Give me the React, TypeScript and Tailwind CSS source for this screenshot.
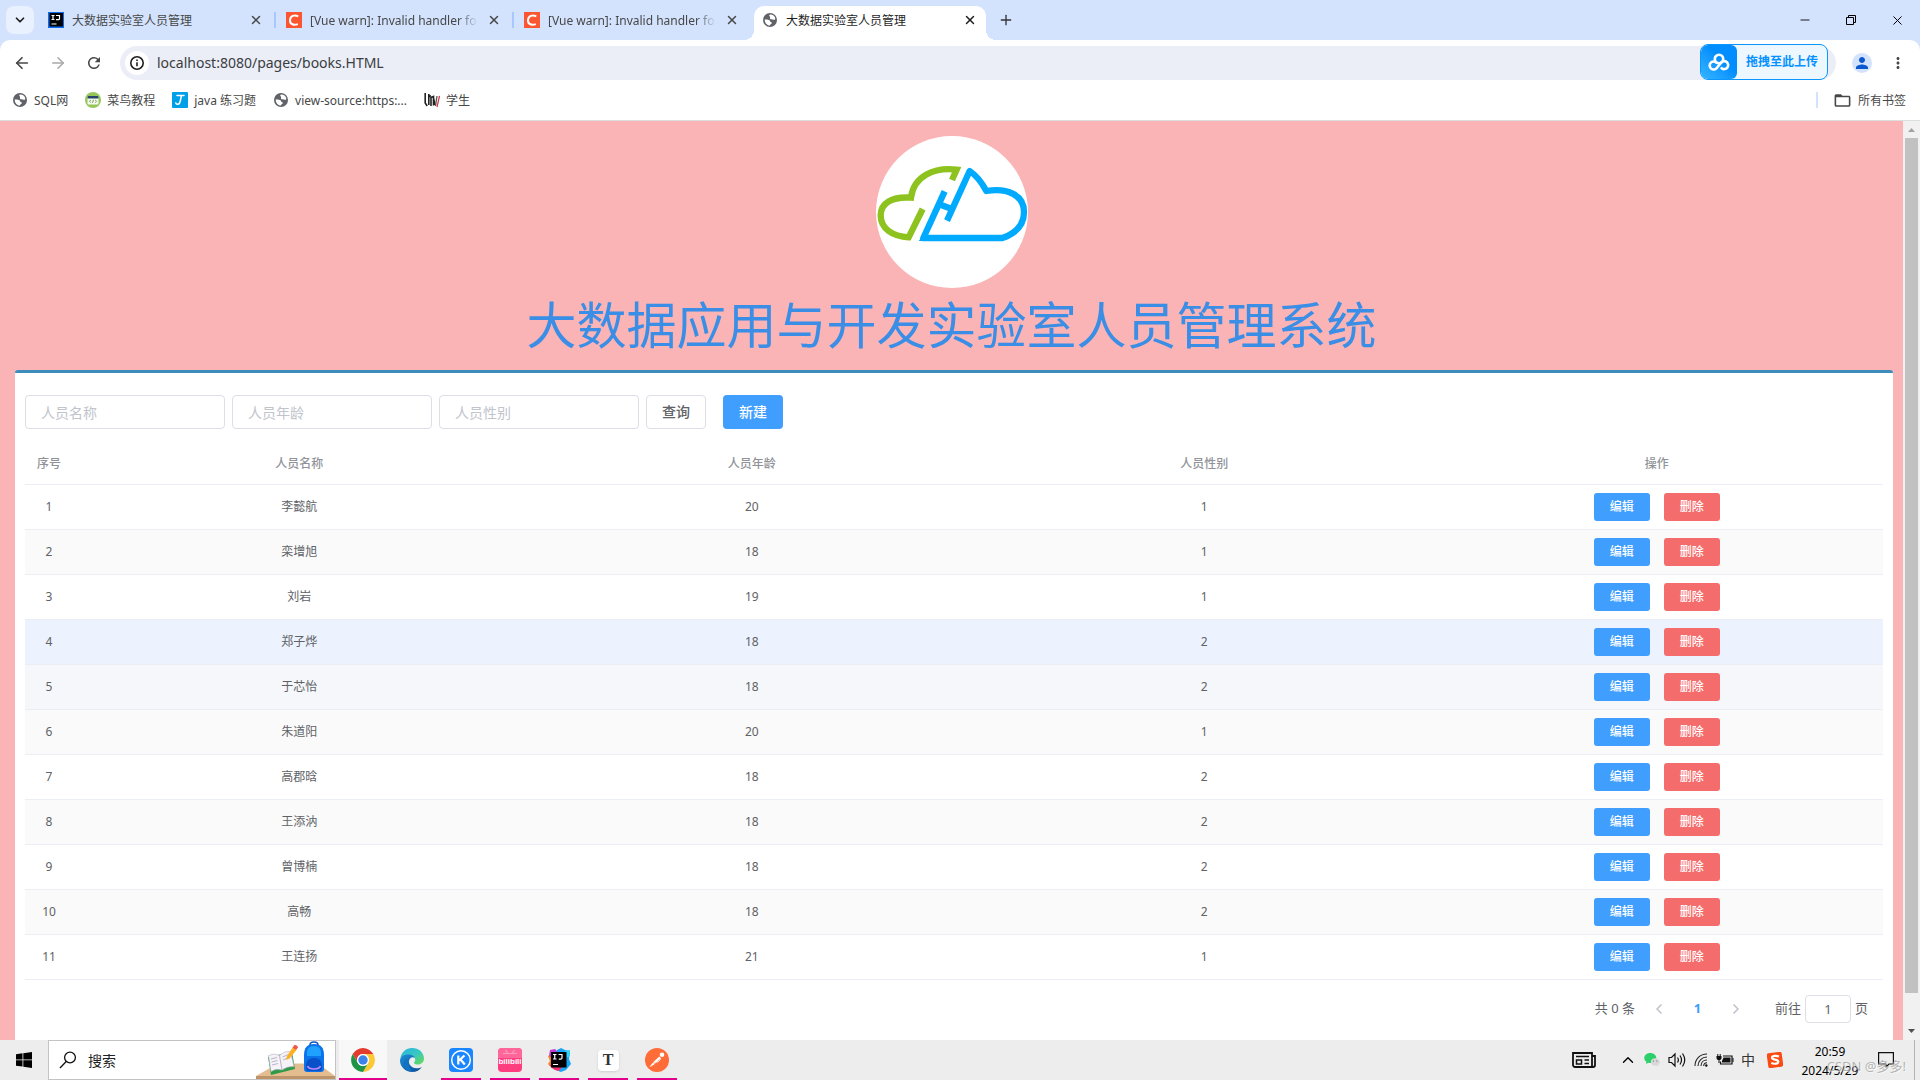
import React, { useState } from 'react';
import { ArrowLeft, ArrowRight, ChevronDown, ChevronLeft, ChevronRight, ChevronUp, Minus, Plus, X } from 'lucide-react';
import { MdFolderOpen, MdMoreVert, MdPerson, MdRefresh } from 'react-icons/md';

interface Person {
  id: number;
  name: string;
  age: number;
  gender: number;
}

interface BrowserTab {
  title: string;
  icon: React.ReactNode;
  active?: boolean;
}

const people: Person[] = [
  { id: 1, name: '李懿航', age: 20, gender: 1 },
  { id: 2, name: '栾增旭', age: 18, gender: 1 },
  { id: 3, name: '刘岩', age: 19, gender: 1 },
  { id: 4, name: '郑子烨', age: 18, gender: 2 },
  { id: 5, name: '于芯怡', age: 18, gender: 2 },
  { id: 6, name: '朱道阳', age: 20, gender: 1 },
  { id: 7, name: '高郡晗', age: 18, gender: 2 },
  { id: 8, name: '王添汭', age: 18, gender: 2 },
  { id: 9, name: '曾博楠', age: 18, gender: 2 },
  { id: 10, name: '高畅', age: 18, gender: 2 },
  { id: 11, name: '王连扬', age: 21, gender: 1 },
];

/* ---------- icons ---------- */

const GlobeIcon = () => (
  <svg viewBox="0 0 16 16" className="size-4 shrink-0">
    <circle cx="8" cy="8" r="7" fill="#5f6368" />
    <path d="M8.2 2.6c1.8-.3 3.7.8 4.6 2.5.6 1.2.5 2.3.2 2.6-.5.4-1.3 0-2-.2-1-.3-2.3 0-2.9-.8-.5-.7.3-1.4-.1-2-.3-.5-.9-.3-.8-1.1.1-.6.5-.9 1-1z" fill="#fff" />
    <path d="M2.7 7.5c1.6-.2 3.7-.1 4.8.7.9.7.3 1.5 1.3 1.7.9.2 1.2.6.9 1.4-.4 1-1.6 1.200-1.800 2.200-2.600.1-5.200-2.200-5.200-6z" fill="#fff" />
  </svg>
);

const IdeaIcon = () => (
  <svg viewBox="0 0 16 16" className="size-4 shrink-0">
    <rect width="16" height="16" fill="#0b6cf0" />
    <rect x="1.5" y="1" width="13.5" height="13.5" fill="#000" />
    <path d="M3.5 3.500h3M5 3.500v4M3.500 7.500h3M8 3.500h3.500v3.200q0 .9-1.200.9H8M3.500 12h5" stroke="#fff" strokeWidth="1.2" fill="none" />
  </svg>
);

const CsdnIcon = () => (
  <svg viewBox="0 0 16 16" className="size-4 shrink-0">
    <rect width="16" height="16" fill="#fc5531" />
    <path d="M12.300 4.300C8.500 2.600 4.200 3.600 4 8.200c-.2 4.300 4 5.300 7.800 3.900" stroke="#fff" strokeWidth="2" fill="none" />
  </svg>
);

const RunoobIcon = () => (
  <svg viewBox="0 0 16 16" className="size-4 shrink-0">
    <circle cx="8" cy="8" r="8" fill="#96c65a" />
    <rect x="2.5" y="4" width="11" height="8.5" rx="1" fill="#f2f8ea" />
    <path d="M2.500 6.500V5a1 1 0 0 1 1-1h9a1 1 0 0 1 1 1v1.500z" fill="#27456b" />
    <path d="M5.800 8l-1.300 1.300 1.300 1.300M10.200 8l1.300 1.300-1.300 1.300M8.500 7.800l-1 3" stroke="#5b7f3a" strokeWidth=".8" fill="none" />
  </svg>
);

const JavaIcon = () => (
  <svg viewBox="0 0 16 16" className="size-4 shrink-0">
    <rect width="16" height="16" rx="1" fill="#00a0e9" />
    <path d="M5 3.500h7M9.500 3.500L8 10c-.6 2.600-3.600 3-4.200 1" stroke="#fff" strokeWidth="1.5" fill="none" strokeLinecap="round" />
  </svg>
);

const StudentIcon = () => (
  <svg viewBox="0 0 16 16" className="size-4 shrink-0" fill="none">
    <path d="M1.200 1v10l2 3M4.800 2v11M4.800 5l2-1.500M7 5v9M7 5.500l2.500-1v9M9.500 6L11 13" stroke="#222" strokeWidth="1.6" />
    <path d="M13 4l-1.500 10" stroke="#555" strokeWidth="1.3" />
    <path d="M15.500 4l-2.500 11" stroke="#d0343c" strokeWidth="1.2" />
  </svg>
);

const InfoIcon = () => (
  <svg viewBox="0 0 16 16" className="size-4" fill="none" stroke="#1f1f1f">
    <circle cx="8" cy="8" r="6.2" strokeWidth="1.6" />
    <path d="M8 7.200v4M8 4.500v1.600" strokeWidth="1.6" />
  </svg>
);

const NetdiskIcon = () => (
  <svg viewBox="0 0 22 18" className="h-[18px] w-[22px]" fill="none" stroke="#fff" strokeWidth="2.6">
    <circle cx="11" cy="6" r="4.2" />
    <path d="M8.300 9.500a4 4 0 1 0 .7 5.300l3.600-4.600a4 4 0 1 1 1 5" strokeLinecap="round" />
  </svg>
);

const CloudLogo = () => (
  <svg viewBox="105 48 456 456" className="size-[152px] rounded-full bg-white" fill="none" strokeWidth="19">
    <path d="M333 180L347 149C280 141 218 168 210 233C152 229 119 250 119 286C119 326 155 350 203 352L245 267" stroke="#8dc21f" />
    <path d="M311 214L247 354H484C524 340 549 315 549 276C549 226 500 202 436 213C424 190 405 166 386 153L318 302" stroke="#00aaff" strokeLinejoin="round" />
    <path d="M233 363L252 338L260 363Z" fill="#00aaff" />
    <path d="M300 255L333 267" stroke="#00aaff" />
  </svg>
);

const WindowsIcon = () => (
  <svg viewBox="0 0 16 16" className="size-4" fill="#000">
    <path d="M0 2.200L6.500 1.300V7.500H0zM7.300 1.200L16 0v7.500H7.300zM0 8.300h6.500v6.300L0 13.700zM7.300 8.300H16V16l-8.700-1.200z" />
  </svg>
);

const SearchIcon = () => (
  <svg viewBox="0 0 18 18" className="size-[18px] shrink-0" fill="none" stroke="#111" strokeWidth="1.3">
    <circle cx="11" cy="6.5" r="5.4" />
    <path d="M7.200 10.500L1 17" />
  </svg>
);

const DeskPicture = () => (
  <svg viewBox="0 0 79 38" className="h-[38px] w-[79px] self-end">
    <path d="M0 35L22 22.500H62L79 35z" fill="#e3bd8f" />
    <path d="M0 35h79v3H0z" fill="#bd9469" />
    <path d="M12 16l3 18 24-6-3-17z" fill="#2c9a49" />
    <path d="M12.500 14.500q6-3 11 0 5-5 11-4l3.500 15q-7-.5-12 3.500-6-2-11 1.500z" fill="#f5f2f8" stroke="#b9b2c8" strokeWidth=".6" />
    <path d="M23.500 14.500l2.500 14.500M15 18l6-1.500M15.500 21l6-1.500M16 24l6-1.500M26.500 16l6-2.500M27 19l6-2.500" stroke="#aaa3bd" strokeWidth=".8" />
    <path d="M30 19l1-4 6-9 3.500 3-7 8.500z" fill="#fdb022" />
    <path d="M36.500 6.500l2-2.500q3-.5 3.500 2.500l-2 2.500z" fill="#f0564a" />
    <path d="M54 4q0-3 4-3t4 3" stroke="#1157c0" strokeWidth="1.6" fill="none" />
    <path d="M48 14q0-11 10-11t10 11v14q0 3-3 3H51q-3 0-3-3z" fill="#0b74ea" />
    <path d="M51 12q0-7 7-7t7 7v3H51z" fill="#1fa2ff" />
    <path d="M50 25q0-8 8-8t8 8v3q0 2-2 2H52q-2 0-2-2z" fill="#0a50c8" />
    <path d="M51.500 25q1 3 6.500 3t6.500-3" stroke="#b98cff" strokeWidth="1.6" fill="none" />
  </svg>
);

const ChromeIcon = () => (
  <svg viewBox="0 0 48 48" className="size-[26px]">
    <path d="M4.950 13A22 22 0 0 1 43.050 13L24 13A11 11 0 0 0 14.470 29.500Z" fill="#e33b2e" />
    <path d="M43.050 13A22 22 0 0 1 24 46L33.530 29.500A11 11 0 0 0 24 13Z" fill="#fcc934" />
    <path d="M24 46A22 22 0 0 1 4.950 13L14.470 29.500A11 11 0 0 0 33.530 29.500Z" fill="#1e9447" />
    <circle cx="24" cy="24" r="11" fill="#fff" />
    <circle cx="24" cy="24" r="8.7" fill="#3b82ea" />
  </svg>
);

const EdgeIcon = () => (
  <svg viewBox="0 0 24 24" className="size-6">
    <defs>
      <linearGradient id="edgeTop" x1="0" y1="0" x2="1" y2="1">
        <stop offset="0" stopColor="#2bb3e0" />
        <stop offset=".5" stopColor="#36c7c4" />
        <stop offset="1" stopColor="#6bdc4c" />
      </linearGradient>
      <linearGradient id="edgeLow" x1="0" y1="0" x2="1" y2="1">
        <stop offset="0" stopColor="#1b8fd8" />
        <stop offset="1" stopColor="#0c4b93" />
      </linearGradient>
    </defs>
    <path d="M.4 10C1.500 4 6.200 0 12 0c7 0 12 4.800 12 10.500 0 3.600-2.700 6-6 6-2.600 0-4-.9-4-1.800 0-.8 1.200-1.200 1.200-3 0-2.500-2.400-4.500-5.700-4.500C5.500 7.200 2 8.500.4 10z" fill="url(#edgeTop)" />
    <path d="M0 12.500C.2 8.500 4 6.500 8.500 6.500c3.500 0 5.600 1.600 6.400 3.400-1.500-1-3.500-.9-4.800.6-3 3.500.2 9.800 6.400 9.800 2.300 0 3.900-.7 5.400-1.600C20 22 16.300 24 12 24 5.300 24 0 18.700 0 12.500z" fill="url(#edgeLow)" />
    <path d="M8.500 11.500c-1.700 4 .2 9.500 5 12.300C7 23.500 3.700 19.500 3.700 15.500c0-3 2-5 4.800-4z" fill="#1273c4" />
  </svg>
);

const KIcon = () => (
  <svg viewBox="0 0 24 24" className="size-6" fill="none" stroke="#fff">
    <rect width="24" height="24" rx="4" fill="#1a86ff" stroke="none" />
    <circle cx="12" cy="12" r="9.3" strokeWidth="1.5" />
    <path d="M9.300 7.500v9M15.500 7.500L10 12.500M11.500 11.500l4.300 5" strokeWidth="2.2" />
  </svg>
);

const BilibiliIcon = () => (
  <svg viewBox="0 0 24 24" className="size-6">
    <rect width="24" height="24" rx="4" fill="#ff3d7f" />
    <path d="M0 4a4 4 0 0 1 4-4h16a4 4 0 0 1 4 4v6H0z" fill="#ff6699" />
    <path d="M7.500 2l2.500 3.500M16.500 2L14 5.500M5 5.500h14" stroke="#ff9dbd" strokeWidth="1.2" />
    <text x="12" y="16" textAnchor="middle" fill="#fff" className="font-['Liberation_Sans',sans-serif] text-[8px] font-bold">bilibili</text>
  </svg>
);

const IntellijIcon = () => (
  <svg viewBox="0 0 24 24" className="size-6">
    <path d="M1 8l5-2 2 3-2 12-5-5 2-3z" fill="#fc801d" />
    <path d="M3 2l5-1 4 4-5 6-5-3z" fill="#c13bd0" />
    <path d="M10 2l4-2 4 2 5 1-1 8 2 5-5 6-5 2-8-3z" fill="#18a5f5" />
    <path d="M2 17l6 5 4 1 3-4-8-3z" fill="#fe2d6b" />
    <path d="M18 3l5-1v6l-4 2z" fill="#31d3f5" />
    <rect x="4" y="4" width="15.5" height="15.5" fill="#000" />
    <path d="M6 6.500h3.500M7.750 6.500V11M6 11h3.500M11.500 6.500h3.500v3.400q0 1.200-1.400 1.200h-1.800M6 16.500h5" stroke="#fff" strokeWidth="1.2" fill="none" />
  </svg>
);

const TyporaIcon = () => (
  <span className="flex size-[21px] items-center justify-center rounded bg-white font-['Liberation_Serif',serif] text-base font-bold text-[#333] shadow-sm">T</span>
);

const PostmanIcon = () => (
  <svg viewBox="0 0 24 24" className="size-6">
    <circle cx="12" cy="12" r="12" fill="#ff6c37" />
    <circle cx="17" cy="6.8" r="2.3" fill="#fff" />
    <path d="M14.300 8.500l1.500 1.700-5 4.800-3-.5zM7.500 15l3 .5L6 18.500 4.500 19z" fill="#fff" />
    <path d="M15.800 10.200q-1 3.300-4 4.300" stroke="#fff" strokeWidth=".8" fill="none" />
  </svg>
);

const NewsIcon = () => (
  <svg viewBox="0 0 24 16" className="h-4 w-6" fill="none" stroke="#111" strokeWidth="1.8">
    <path d="M1 1h19v14H3a2 2 0 0 1-2-2zM20 4h3v9a2 2 0 0 1-2 2h-3" />
    <path d="M4 4.500h13M12.500 8H17M12.500 11.500H17" strokeWidth="1.5" />
    <rect x="4.500" y="8" width="5" height="4" strokeWidth="1.5" />
  </svg>
);

const WechatIcon = () => (
  <svg viewBox="0 0 16 16" className="size-4">
    <path d="M6.300 1C2.800 1 .3 3.200.3 6c0 1.600.8 2.900 2.100 3.800L2 12l2.200-1.200c3.900.8 8.100-1 8.100-4.800C12.300 3.200 9.800 1 6.300 1z" fill="#2bd06a" />
    <path d="M11.300 6.200c-2.600 0-4.500 1.700-4.500 3.700s1.900 3.700 4.500 3.700l1.200-.1 1.600.9-.3-1.500c1.200-.7 2-1.800 2-3 0-2-1.900-3.700-4.500-3.700z" fill="#d8d8d8" />
    <path d="M9.500 8.500v1.200M12.800 8.500v1.200" stroke="#777" />
  </svg>
);

const VolumeIcon = () => (
  <svg viewBox="0 0 18 16" className="h-4 w-[18px]" fill="none" stroke="#111" strokeWidth="1.2">
    <path d="M1 5.500h2.500L7 2v12l-3.500-3.500H1zM9.500 5.500q1.800 2.500 0 5M12 3.500q3 4.500 0 9M14.500 1.500q4.500 6.500 0 13" />
  </svg>
);

const WifiIcon = () => (
  <svg viewBox="0 0 14 14" className="size-[14px]" fill="none" stroke="#222" strokeWidth="1.1">
    <path d="M1 13C1 6 6 1 13 1M4 13c0-5 4-9 9-9M7 13c0-3.500 2.500-6 6-6M9.700 13c0-2 1.300-3.300 3.300-3.300" />
    <circle cx="12.3" cy="12.5" r="1.2" fill="#111" stroke="none" />
  </svg>
);

const BatteryIcon = () => (
  <svg viewBox="0 0 18 14" className="h-[14px] w-[18px]">
    <path d="M7 3h9v8H4.500V8.500" fill="none" stroke="#111" strokeWidth="1.2" />
    <path d="M7.500 4.500h7v5H6V8z" fill="#111" />
    <path d="M16.500 5h1v4h-1zM.5 3h5v2.500L4.300 7H1.700L.5 5.500zM1.300 1h1v2h-1zM3.700 1h1v2h-1zM2.500 7h1v3h-1z" fill="#111" />
  </svg>
);

const SogouIcon = () => (
  <svg viewBox="0 0 16 16" className="size-4">
    <rect x=".5" y=".5" width="15" height="15" rx="2" fill="#fb4a12" transform="rotate(-8 8 8)" />
    <path d="M12 4.500C9 3.300 5 3.700 5 5.800c0 2.400 6.300 1.300 6.300 3.900 0 2.300-4.300 2.500-7 1.300" stroke="#fff" strokeWidth="2.2" fill="none" />
  </svg>
);

const NoticeIcon = () => (
  <svg viewBox="0 0 16 16" className="size-4" fill="none" stroke="#111" strokeWidth="1.2">
    <path d="M.6.600h14.800v11.400H11L8 15v-3H.6z" />
  </svg>
);

const browserTabs: BrowserTab[] = [
  { title: '大数据实验室人员管理', icon: <IdeaIcon /> },
  { title: '[Vue warn]: Invalid handler fo', icon: <CsdnIcon /> },
  { title: '[Vue warn]: Invalid handler fo', icon: <CsdnIcon /> },
  { title: '大数据实验室人员管理', icon: <GlobeIcon />, active: true },
];

const bookmarks = [
  { title: 'SQL网', icon: <GlobeIcon /> },
  { title: '菜鸟教程', icon: <RunoobIcon /> },
  { title: 'java 练习题', icon: <JavaIcon /> },
  { title: 'view-source:https:...', icon: <GlobeIcon /> },
  { title: '学生', icon: <StudentIcon /> },
];

const taskbarApps = [
  { name: 'Microsoft Edge', icon: <EdgeIcon />, running: false },
  { name: 'KuGou', icon: <KIcon />, running: true },
  { name: 'bilibili', icon: <BilibiliIcon />, running: true },
  { name: 'IntelliJ IDEA', icon: <IntellijIcon />, running: true },
  { name: 'Typora', icon: <TyporaIcon />, running: true },
  { name: 'Postman', icon: <PostmanIcon />, running: true },
];

/* ---------- browser chrome ---------- */

const TabStrip = () => (
  <div className="flex h-10 shrink-0 items-center bg-[#d3e3fd] pl-[6px]">
    <button aria-label="搜索标签页" className="flex size-7 items-center justify-center rounded-lg bg-[#e9f1fe]">
      <ChevronDown size={14} strokeWidth={3} className="text-[#1f1f1f]" />
    </button>
    <div className="ml-[6px] flex h-full items-center">
      {browserTabs.map((tab, index) => (
        <React.Fragment key={index}>
          {index > 0 && <span className={`mx-[2px] h-4 w-[2px] ${tab.active ? '' : 'bg-[#a8c7fa]'}`} />}
          <div
            className={`relative flex w-[232px] items-center px-2 ${
              tab.active ? 'mt-[6px] h-[34px] self-end rounded-t-[10px] bg-white pb-[6px] text-[#1f1f1f]' : 'h-7 text-[#474747]'
            }`}
          >
            {tab.icon}
            <span className={`ml-2 w-[168px] pt-[2px] text-xs whitespace-nowrap ${index === 1 || index === 2 ? '[mask-image:linear-gradient(to_right,#000_88%,transparent)]' : ''}`}>
              {tab.title}
            </span>
            <button aria-label="关闭标签页" className="ml-2 flex size-4 items-center justify-center">
              <X size={14} strokeWidth={2.5} className="shrink-0" />
            </button>
            {tab.active && (
              <>
                <span className="absolute bottom-0 -left-[10px] size-[10px] bg-[radial-gradient(circle_at_0_0,transparent_10px,#fff_10px)]" />
                <span className="absolute -right-[10px] bottom-0 size-[10px] bg-[radial-gradient(circle_at_100%_0,transparent_10px,#fff_10px)]" />
              </>
            )}
          </div>
        </React.Fragment>
      ))}
    </div>
    <button aria-label="新标签页" className="ml-3 flex size-4 items-center justify-center">
      <Plus size={16} className="shrink-0 text-[#333]" />
    </button>
    <div className="ml-auto flex h-full">
      <button aria-label="最小化" className="flex w-[46px] items-center justify-center">
        <Minus size={14} strokeWidth={1.5} />
      </button>
      <button aria-label="还原" className="flex w-[46px] items-center justify-center">
        <svg viewBox="0 0 10 10" className="size-[10px]" fill="none" stroke="#000">
          <path d="M.5 2.500h7v7h-7zM2.500 2.500v-2h7v7h-2" />
        </svg>
      </button>
      <button aria-label="关闭" className="flex w-[46px] items-center justify-center">
        <X size={15} strokeWidth={1.6} />
      </button>
    </div>
  </div>
);

const Toolbar = () => (
  <div className="shrink-0 bg-[#d3e3fd]">
    <div className="flex h-10 items-end rounded-t-[10px] bg-white pr-[13px] pl-[13px]">
      <div className="flex h-[34px] items-center gap-[18px] text-[#474747]">
        <button aria-label="后退"><ArrowLeft size={18} strokeWidth={2.3} /></button>
        <button aria-label="前进"><ArrowRight size={18} className="text-[#a9a9a9]" /></button>
        <button aria-label="刷新"><MdRefresh size={18} /></button>
      </div>
      <div className="ml-[17px] flex h-[34px] flex-1 items-center rounded-full bg-[#ebeef7] pr-2 pl-[5px]">
        <span className="flex size-6 items-center justify-center rounded-full bg-white">
          <InfoIcon />
        </span>
        <input
          aria-label="地址栏"
          defaultValue="localhost:8080/pages/books.HTML"
          className="ml-2 flex-1 bg-transparent text-sm text-[#3a3d42] outline-none"
        />
        <button className="flex h-9 w-32 items-center self-end overflow-hidden rounded-lg border border-[#0c96ff] bg-[#edf7ff] text-xs font-bold text-[#0591ff]">
          <span className="flex h-full w-9 shrink-0 items-center justify-center rounded-r-md bg-linear-to-tr from-[#33b5ff] to-[#008dff] to-60%">
            <NetdiskIcon />
          </span>
          <span className="flex-1 text-center whitespace-nowrap">拖拽至此上传</span>
        </button>
      </div>
      <div className="flex h-[34px] items-center">
        <button aria-label="用户" className="ml-4 flex size-5 items-center justify-center rounded-full bg-[#d3e3fd] text-[#0b57d0]">
          <MdPerson size={18} />
        </button>
        <button aria-label="菜单" className="ml-[17px] text-[#474747]"><MdMoreVert size={18} /></button>
      </div>
    </div>
    <div className="flex h-[41px] items-center border-b border-[#dcdfe0] bg-white pr-[14px] pl-3 text-xs text-[#474747]">
      <nav className="flex items-center gap-[17px]">
        {bookmarks.map((item) => (
          <a key={item.title} href="#" className="flex items-center gap-[6px] whitespace-nowrap">
            {item.icon}
            <span className="pt-[2px]">{item.title}</span>
          </a>
        ))}
      </nav>
      <a href="#" className="ml-auto flex items-center">
        <span className="mr-[15px] h-4 w-[2px] bg-[#d3e3fd]" />
        <MdFolderOpen size={19} />
        <span className="ml-[6px] pt-[2px]">所有书签</span>
      </a>
    </div>
  </div>
);

/* ---------- page ---------- */

const SearchInput = ({ label }: { label: string }) => (
  <input
    type="text"
    aria-label={label}
    placeholder={label}
    className="h-[34px] w-[200px] rounded border border-[#dcdfe6] bg-white px-[15px] text-sm text-[#606266] outline-none placeholder:text-[#c0c4cc]"
  />
);

const rowColor = (id: number) => {
  if (id === 4) return 'bg-[#ecf3ff]';
  if (id === 5) return 'bg-[#f5f7fa]';
  return id % 2 === 0 ? 'bg-[#fafafa]' : 'bg-white';
};

const PeopleTable = () => (
  <table className="w-full table-fixed border-collapse text-center text-xs text-[#606266]">
    <colgroup>
      <col className="w-12" />
      <col />
      <col />
      <col />
      <col />
    </colgroup>
    <thead className="text-[#909399]">
      <tr className="h-10 border-b border-[#ebeef5]">
        <th className="font-medium">序号</th>
        <th className="font-medium">人员名称</th>
        <th className="font-medium">人员年龄</th>
        <th className="font-medium">人员性别</th>
        <th className="font-medium">操作</th>
      </tr>
    </thead>
    <tbody>
      {people.map((person) => (
        <tr key={person.id} className={`h-[45px] border-b border-[#ebeef5] ${rowColor(person.id)}`}>
          <td>{person.id}</td>
          <td>{person.name}</td>
          <td>{person.age}</td>
          <td>{person.gender}</td>
          <td>
            <div className="flex justify-center gap-[14px]">
              <button className="h-7 w-14 rounded-[3px] bg-[#409eff] font-medium text-white">编辑</button>
              <button className="h-7 w-14 rounded-[3px] bg-[#f56c6c] font-medium text-white">删除</button>
            </div>
          </td>
        </tr>
      ))}
    </tbody>
  </table>
);

const Pagination = () => {
  const [page, setPage] = useState('1');

  return (
    <div className="mt-[15px] flex h-7 items-center justify-end pr-[15px] text-[13px] text-[#606266]">
      <span>共 0 条</span>
      <button aria-label="上一页" className="ml-4 text-[#c0c4cc]"><ChevronLeft size={16} strokeWidth={2.5} /></button>
      <button className="w-[61px] font-bold text-[#409eff]">1</button>
      <button aria-label="下一页" className="text-[#c0c4cc]"><ChevronRight size={16} strokeWidth={2.5} /></button>
      <label htmlFor="page" className="ml-[31px]">前往</label>
      <input
        id="page"
        value={page}
        onChange={(e) => setPage(e.target.value)}
        className="mx-1 h-7 w-[46px] rounded border border-[#dcdfe6] text-center text-[#606266] outline-none"
      />
      <span>页</span>
    </div>
  );
};

const ManagePage = () => (
  <main className="flex min-w-0 flex-1 flex-col bg-[#fab4b6]">
    <header className="flex flex-col items-center pt-[15px]">
      <CloudLogo />
      <h1 className="h-[82px] text-[50px] leading-[74px] whitespace-nowrap text-[#3a8ee6]">大数据应用与开发实验室人员管理系统</h1>
    </header>
    <section className="mr-[10px] ml-[15px] flex-1 rounded-t-[3px] border-t-[3px] border-[#3c8dbc] bg-white px-[10px] pt-[22px]">
      <div className="flex gap-[7px]">
        <SearchInput label="人员名称" />
        <SearchInput label="人员年龄" />
        <SearchInput label="人员性别" />
        <button className="h-[34px] w-[60px] rounded border border-[#dcdfe6] bg-white text-sm font-medium text-[#606266]">查询</button>
        <button className="ml-[10px] h-[34px] w-[60px] rounded bg-[#409eff] text-sm font-medium text-white">新建</button>
      </div>
      <div className="mt-[15px]">
        <PeopleTable />
      </div>
      <Pagination />
    </section>
  </main>
);

const Scrollbar = () => (
  <div className="flex w-[17px] shrink-0 flex-col items-center bg-[#f1f1f1]">
    <svg viewBox="0 0 17 17" className="size-[17px] shrink-0"><path d="M5 11h7L8.500 7z" fill="#a3a3a3" /></svg>
    <div className="w-[13px] flex-1 bg-[#c1c1c1]" />
    <div className="h-[30px]" />
    <svg viewBox="0 0 17 17" className="size-[17px] shrink-0"><path d="M5 6h7l-3.500 4z" fill="#505050" /></svg>
  </div>
);

/* ---------- taskbar ---------- */

const Taskbar = () => (
  <footer className="flex h-10 shrink-0 bg-[#ededed]">
    <button aria-label="开始" className="flex w-12 items-center justify-center"><WindowsIcon /></button>
    <div className="flex w-72 items-center border border-[#c3c3c3] bg-white pl-[10px]">
      <SearchIcon />
      <input
        aria-label="搜索"
        placeholder="搜索"
        className="ml-[11px] w-0 flex-1 bg-transparent pt-[2px] text-sm outline-none placeholder:text-[#222]"
      />
      <DeskPicture />
    </div>
    <button aria-label="Google Chrome" className="ml-[3px] flex w-12 items-center justify-center border-b-2 border-[#e3008c] bg-[#f8f8f8] pt-[2px]">
      <ChromeIcon />
    </button>
    <div className="ml-[5px] flex gap-[9px]">
      {taskbarApps.map((app) => (
        <button
          key={app.name}
          aria-label={app.name}
          className={`flex w-10 items-center justify-center border-b-2 pt-[2px] ${app.running ? 'border-[#e3008c]' : 'border-transparent'}`}
        >
          {app.icon}
        </button>
      ))}
    </div>
    <div className="relative ml-auto flex items-center pr-[5px]">
      <NewsIcon />
      <ChevronUp size={18} strokeWidth={1.8} className="mr-[7px] ml-[23px]" />
      <div className="flex items-center gap-2">
        <WechatIcon />
        <VolumeIcon />
        <WifiIcon />
        <BatteryIcon />
      </div>
      <span className="ml-[7px] text-sm text-[#333]">中</span>
      <span className="ml-3"><SogouIcon /></span>
      <div className="ml-4 flex w-[62px] flex-col pt-[2px] text-center text-xs leading-[19px] whitespace-nowrap text-black">
        <span>20:59</span>
        <span>2024/5/29</span>
      </div>
      <span className="mr-5 ml-[17px]"><NoticeIcon /></span>
      <span className="h-full w-px bg-[#b5b5b5]" />
      <span className="absolute right-[14px] bottom-1 text-[13px] leading-5 whitespace-nowrap text-[#999]/70 [text-shadow:1px_1px_0_#fff8]">CSDN @多多!</span>
    </div>
  </footer>
);

const App: React.FC = () => {
  return (
    <div className="flex h-screen flex-col overflow-hidden bg-white font-['Noto_Sans','Noto_Sans_CJK_SC',sans-serif]">
      <TabStrip />
      <Toolbar />
      <div className="flex min-h-0 flex-1">
        <ManagePage />
        <Scrollbar />
      </div>
      <Taskbar />
    </div>
  );
};

export default App;
